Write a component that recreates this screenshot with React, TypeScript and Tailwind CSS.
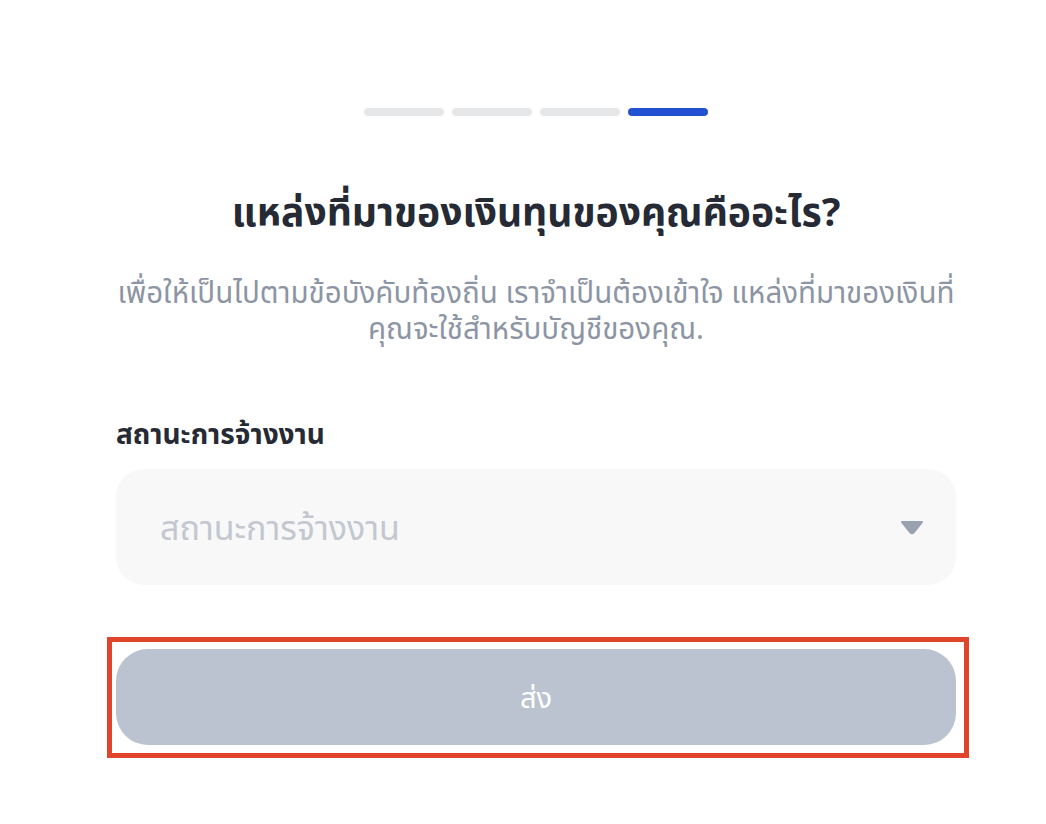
import React from "react";

export default function App() {
  const font = { fontFamily: '"Noto Sans", "Noto Sans Thai", "Noto Sans CJK SC", sans-serif' };
  return (
    <div className="min-h-[824px] w-[1046px] bg-white" style={font}>
      <div className="ml-[116px] w-[840px] pt-[108px] flex flex-col">
        <div className="flex justify-center gap-2">
          <div className="h-2 w-20 rounded-full bg-[#e6e7e9]" />
          <div className="h-2 w-20 rounded-full bg-[#e6e7e9]" />
          <div className="h-2 w-20 rounded-full bg-[#e6e7e9]" />
          <div className="h-2 w-20 rounded-full bg-[#2252d2]" />
        </div>
        <h1 className="mt-[71px] text-center text-[39px] leading-[48px] font-bold text-[#252a35]">
          แหล่งที่มาของเงินทุนของคุณคืออะไร?
        </h1>
        <p className="mt-[39px] text-center text-[29.5px] leading-[36px] text-[#8d95a5] whitespace-nowrap">
          เพื่อให้เป็นไปตามข้อบังคับท้องถิ่น เราจำเป็นต้องเข้าใจ แหล่งที่มาของเงินที่
          <br />
          คุณจะใช้สำหรับบัญชีของคุณ.
        </p>
        <label className="mt-[71px] text-[28px] leading-[32px] font-bold text-[#252a35]">
          สถานะการจ้างงาน
        </label>
        <div className="mt-[20px] h-[116px] rounded-[28px] bg-[#f8f8f8] flex items-center justify-between pl-[44px] pr-[32px]">
          <span className="text-[34px] text-[#c2c7d0]">สถานะการจ้างงาน</span>
          <svg width="24" height="15" viewBox="0 0 24 15">
            <path d="M2 2 L22 2 L13.5 12.5 Q12 14 10.5 12.5 Z" fill="#9aa2b1" stroke="#9aa2b1" strokeWidth="2" strokeLinejoin="round" />
          </svg>
        </div>
        <div className="relative mt-[64px]">
          <button className="h-[96px] w-full rounded-[32px] bg-[#bac3cf] text-[29px] text-white">
            ส่ง
          </button>
          <div className="pointer-events-none absolute left-[-9px] right-[-13px] top-[-12px] bottom-[-13px] border-[5px] border-[#e0452b]" />
        </div>
      </div>
    </div>
  );
}
